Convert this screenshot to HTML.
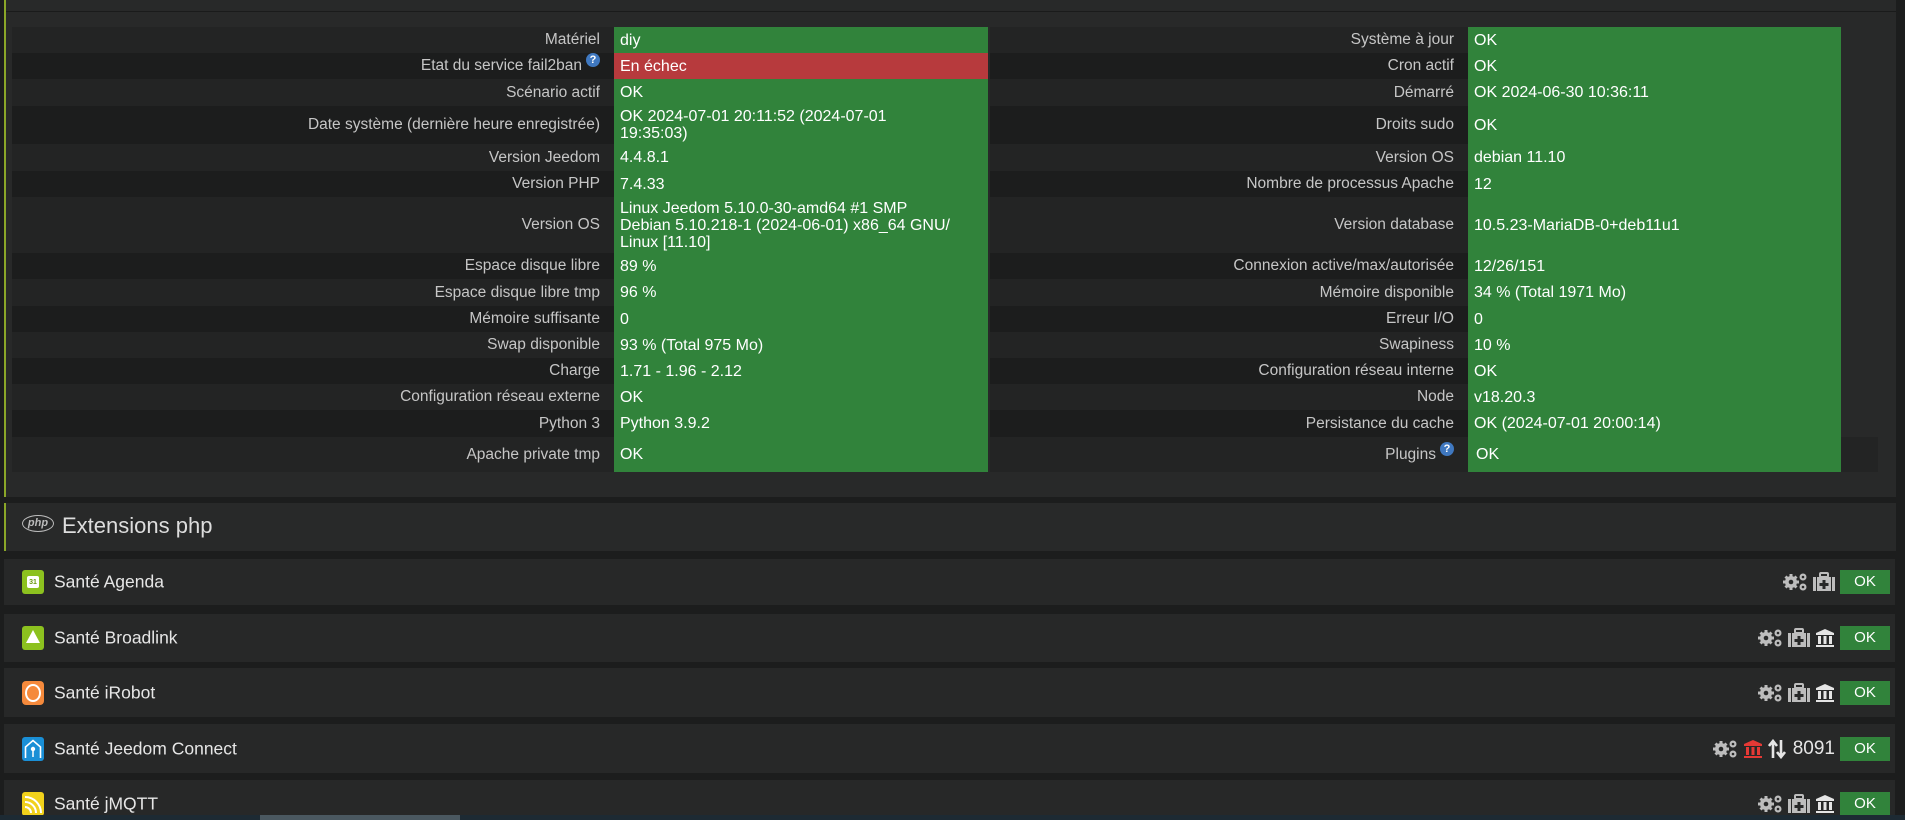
<!DOCTYPE html>
<html><head><meta charset="utf-8">
<style>
*{margin:0;padding:0;box-sizing:border-box}
html,body{width:1905px;height:820px;overflow:hidden;background:#1c1d1d;font-family:"Liberation Sans",sans-serif;font-size:16px;color:#cfcfcf}
.panel{position:absolute;left:4px;top:0;width:1892px;height:497px;background:#282929;border-left:2px solid #8aa628}
.topline{position:absolute;left:6px;top:11px;width:1890px;height:1px;background:#1a1b1b}
.row{position:absolute;display:flex}
.lab{text-align:right;padding-right:14px;display:flex;align-items:center;justify-content:flex-end;color:#c6c6c6;font-size:15.5px}
.val{background:#31833b;color:#fff;padding-left:6px;display:flex;align-items:center;line-height:17px}
.red{background:#b73a3d}
.q{display:inline-block;width:14px;height:14px;border-radius:7px;background:#3f78c0;color:#fff;font-size:11px;font-weight:bold;text-align:center;line-height:14px;vertical-align:top;margin-left:4px;position:relative;top:-6px}
.ext{position:absolute;left:4px;top:503px;width:1892px;height:48px;background:#282929;border-left:2px solid #8aa628;font-size:22px;color:#ddd}
.plug{position:absolute;left:4px;width:1891px;background:#272828;font-size:17.5px;color:#e6e6e6}
.plug .t{position:absolute;left:50px;top:50%;transform:translateY(-50%)}
.plug .ic{position:absolute;left:18px;top:50%;width:22px;height:24px;margin-top:-12px;border-radius:3px}
.ok{position:absolute;left:1836px;width:50px;height:24px;top:50%;margin-top:-12px;background:#31833b;color:#fff;font-size:15px;text-align:center;line-height:24px}
.icons{position:absolute;right:60px;top:50%;transform:translateY(-50%);display:flex;align-items:center;gap:5px;color:#e5e5e5;font-size:19px}
.sb{position:absolute;left:0;top:815px;width:1905px;height:5px;background:#1d2a33}
.sb div{position:absolute;left:260px;width:200px;top:0;height:5px;background:#4a5860}
</style></head><body>
<svg width="0" height="0" style="position:absolute">
<symbol id="gears" viewBox="0 0 26 20"><g fill="#bdbdbd"><circle cx="9" cy="10" r="6"/><g stroke="#bdbdbd" stroke-width="3"><line x1="9" y1="2" x2="9" y2="18"/><line x1="1" y1="10" x2="17" y2="10"/><line x1="3.5" y1="4.5" x2="14.5" y2="15.5"/><line x1="14.5" y1="4.5" x2="3.5" y2="15.5"/></g><circle cx="9" cy="10" r="2.3" fill="#272828"/><circle cx="21" cy="5" r="3.5"/><circle cx="21" cy="15" r="3.5"/><circle cx="21" cy="5" r="1.3" fill="#272828"/><circle cx="21" cy="15" r="1.3" fill="#272828"/></g></symbol>
<symbol id="med" viewBox="0 0 22 20"><g fill="#bdbdbd"><rect x="7" y="1" width="8" height="4" rx="1" fill="none" stroke="#bdbdbd" stroke-width="2"/><rect x="0" y="5" width="3" height="14"/><rect x="4" y="5" width="14" height="14"/><rect x="19" y="5" width="3" height="14"/></g><path d="M9.5 8h3v3h3v3h-3v3h-3v-3h-3v-3h3z" fill="#272828"/></symbol>
<symbol id="bank" viewBox="0 0 20 20"><path d="M10 1L1 5v2h18V5z M3 8h3v8H3z M8.5 8h3v8h-3z M14 8h3v8h-3z M1 17h18v2H1z" fill="currentColor"/></symbol>
</svg>

<div class="panel"></div>
<div class="topline"></div>

<div class="row" style="left:12px;top:27px;height:26px;background:#232424"><div class="lab" style="width:602px">Matériel</div><div class="val" style="width:374px">diy</div></div>
<div class="row" style="left:12px;top:53px;height:26px;background:#1c1d1d"><div class="lab" style="width:602px">Etat du service fail2ban<span class="q">?</span></div><div class="val red" style="width:374px">En échec</div></div>
<div class="row" style="left:12px;top:79px;height:27px;background:#232424"><div class="lab" style="width:602px">Scénario actif</div><div class="val" style="width:374px">OK</div></div>
<div class="row" style="left:12px;top:106px;height:38px;background:#1c1d1d"><div class="lab" style="width:602px">Date système (dernière heure enregistrée)</div><div class="val" style="width:374px">OK 2024-07-01 20:11:52 (2024-07-01<br>19:35:03)</div></div>
<div class="row" style="left:12px;top:144px;height:27px;background:#232424"><div class="lab" style="width:602px">Version Jeedom</div><div class="val" style="width:374px">4.4.8.1</div></div>
<div class="row" style="left:12px;top:171px;height:26px;background:#1c1d1d"><div class="lab" style="width:602px">Version PHP</div><div class="val" style="width:374px">7.4.33</div></div>
<div class="row" style="left:12px;top:197px;height:56px;background:#232424"><div class="lab" style="width:602px">Version OS</div><div class="val" style="width:374px">Linux Jeedom 5.10.0-30-amd64 #1 SMP<br>Debian 5.10.218-1 (2024-06-01) x86_64 GNU/<br>Linux [11.10]</div></div>
<div class="row" style="left:12px;top:253px;height:26px;background:#1c1d1d"><div class="lab" style="width:602px">Espace disque libre</div><div class="val" style="width:374px">89 %</div></div>
<div class="row" style="left:12px;top:279px;height:27px;background:#232424"><div class="lab" style="width:602px">Espace disque libre tmp</div><div class="val" style="width:374px">96 %</div></div>
<div class="row" style="left:12px;top:306px;height:26px;background:#1c1d1d"><div class="lab" style="width:602px">Mémoire suffisante</div><div class="val" style="width:374px">0</div></div>
<div class="row" style="left:12px;top:332px;height:26px;background:#232424"><div class="lab" style="width:602px">Swap disponible</div><div class="val" style="width:374px">93 % (Total 975 Mo)</div></div>
<div class="row" style="left:12px;top:358px;height:26px;background:#1c1d1d"><div class="lab" style="width:602px">Charge</div><div class="val" style="width:374px">1.71 - 1.96 - 2.12</div></div>
<div class="row" style="left:12px;top:384px;height:26px;background:#232424"><div class="lab" style="width:602px">Configuration réseau externe</div><div class="val" style="width:374px">OK</div></div>
<div class="row" style="left:12px;top:410px;height:27px;background:#1c1d1d"><div class="lab" style="width:602px">Python 3</div><div class="val" style="width:374px">Python 3.9.2</div></div>
<div class="row" style="left:12px;top:437px;height:35px;background:#232424"><div class="lab" style="width:602px">Apache private tmp</div><div class="val" style="width:374px">OK</div></div>

<div class="row" style="left:990px;top:27px;height:26px;background:#232424"><div class="lab" style="width:478px">Système à jour</div><div class="val" style="width:373px">OK</div></div>
<div class="row" style="left:990px;top:53px;height:26px;background:#1c1d1d"><div class="lab" style="width:478px">Cron actif</div><div class="val" style="width:373px">OK</div></div>
<div class="row" style="left:990px;top:79px;height:27px;background:#232424"><div class="lab" style="width:478px">Démarré</div><div class="val" style="width:373px">OK 2024-06-30 10:36:11</div></div>
<div class="row" style="left:990px;top:106px;height:38px;background:#1c1d1d"><div class="lab" style="width:478px">Droits sudo</div><div class="val" style="width:373px">OK</div></div>
<div class="row" style="left:990px;top:144px;height:27px;background:#232424"><div class="lab" style="width:478px">Version OS</div><div class="val" style="width:373px">debian 11.10</div></div>
<div class="row" style="left:990px;top:171px;height:26px;background:#1c1d1d"><div class="lab" style="width:478px">Nombre de processus Apache</div><div class="val" style="width:373px">12</div></div>
<div class="row" style="left:990px;top:197px;height:56px;background:#232424"><div class="lab" style="width:478px">Version database</div><div class="val" style="width:373px">10.5.23-MariaDB-0+deb11u1</div></div>
<div class="row" style="left:990px;top:253px;height:26px;background:#1c1d1d"><div class="lab" style="width:478px">Connexion active/max/autorisée</div><div class="val" style="width:373px">12/26/151</div></div>
<div class="row" style="left:990px;top:279px;height:27px;background:#232424"><div class="lab" style="width:478px">Mémoire disponible</div><div class="val" style="width:373px">34 % (Total 1971 Mo)</div></div>
<div class="row" style="left:990px;top:306px;height:26px;background:#1c1d1d"><div class="lab" style="width:478px">Erreur I/O</div><div class="val" style="width:373px">0</div></div>
<div class="row" style="left:990px;top:332px;height:26px;background:#232424"><div class="lab" style="width:478px">Swapiness</div><div class="val" style="width:373px">10 %</div></div>
<div class="row" style="left:990px;top:358px;height:26px;background:#1c1d1d"><div class="lab" style="width:478px">Configuration réseau interne</div><div class="val" style="width:373px">OK</div></div>
<div class="row" style="left:990px;top:384px;height:26px;background:#232424"><div class="lab" style="width:478px">Node</div><div class="val" style="width:373px">v18.20.3</div></div>
<div class="row" style="left:990px;top:410px;height:27px;background:#1c1d1d"><div class="lab" style="width:478px">Persistance du cache</div><div class="val" style="width:373px">OK (2024-07-01 20:00:14)</div></div>
<div class="row" style="left:990px;top:437px;height:35px;background:#232424;width:888px"><div class="lab" style="width:478px">Plugins<span class="q">?</span></div><div class="val" style="width:373px;padding-left:8px">OK</div></div>

<div class="ext"><span style="position:absolute;left:16px;top:12px;width:32px;height:17px;border:1.5px solid #bbb;border-radius:50%;font-size:11px;font-style:italic;font-weight:bold;color:#bbb;text-align:center;line-height:14px">php</span><span style="position:absolute;left:56px;top:10px">Extensions php</span></div>

<div class="plug" style="top:559px;height:46px"><div class="ic" style="background:#8cc11f"><div style="position:absolute;left:5px;top:6px;width:12px;height:12px;background:#fff;border-radius:2px;font-size:7px;color:#6a9a10;text-align:center;line-height:13px;font-weight:bold">31</div></div><span class="t">Santé Agenda</span>
<div class="icons"><svg width="26" height="20"><use href="#gears"/></svg><svg width="22" height="20"><use href="#med"/></svg></div><div class="ok">OK</div></div>

<div class="plug" style="top:614px;height:48px"><div class="ic" style="background:#8cc11f"><div style="position:absolute;left:4px;top:4px;width:0;height:0;border-left:7px solid transparent;border-right:7px solid transparent;border-bottom:13px solid #fff"></div></div><span class="t">Santé Broadlink</span>
<div class="icons"><svg width="26" height="20"><use href="#gears"/></svg><svg width="22" height="20"><use href="#med"/></svg><svg width="20" height="20" style="color:#e5e5e5"><use href="#bank"/></svg></div><div class="ok">OK</div></div>

<div class="plug" style="top:668px;height:49px"><div class="ic" style="background:#f58a3c;border-radius:4px"><div style="position:absolute;left:3px;top:3px;width:16px;height:18px;border:2px solid #fff;border-radius:50%"></div></div><span class="t">Santé iRobot</span>
<div class="icons"><svg width="26" height="20"><use href="#gears"/></svg><svg width="22" height="20"><use href="#med"/></svg><svg width="20" height="20" style="color:#e5e5e5"><use href="#bank"/></svg></div><div class="ok">OK</div></div>

<div class="plug" style="top:724px;height:49px"><div class="ic" style="background:#1a8fd6"><svg width="22" height="24" style="position:absolute;left:0;top:0"><path d="M3.5 21V10L11 3.5 18.5 10v11" fill="none" stroke="#fff" stroke-width="1.6"/><circle cx="11" cy="12" r="2.2" fill="#fff"/><line x1="11" y1="13" x2="11" y2="20" stroke="#fff" stroke-width="1.5"/></svg></div><span class="t">Santé Jeedom Connect</span>
<div class="icons"><svg width="26" height="20"><use href="#gears"/></svg><svg width="20" height="20" style="color:#e53935"><use href="#bank"/></svg><svg width="18" height="20"><path d="M5 19V3M1 7l4-5 4 5M13 1v16M9 13l4 5 4-5" stroke="#e5e5e5" stroke-width="2.6" fill="none"/></svg><span style="margin-left:2px">8091</span></div><div class="ok">OK</div></div>

<div class="plug" style="top:780px;height:40px"><div class="ic" style="background:#f1d11b;top:24px"><svg width="22" height="24" style="position:absolute;left:0;top:0"><path d="M3 5a16 16 0 0 1 16 16M3 10a11 11 0 0 1 11 11M3 15a6 6 0 0 1 6 6" fill="none" stroke="#fff" stroke-width="2"/></svg></div><span class="t" style="top:24px">Santé jMQTT</span>
<div class="icons" style="top:24px"><svg width="26" height="20"><use href="#gears"/></svg><svg width="22" height="20"><use href="#med"/></svg><svg width="20" height="20" style="color:#e5e5e5"><use href="#bank"/></svg></div><div class="ok" style="top:24px">OK</div></div>

<div class="sb"><div></div></div>
</body></html>
